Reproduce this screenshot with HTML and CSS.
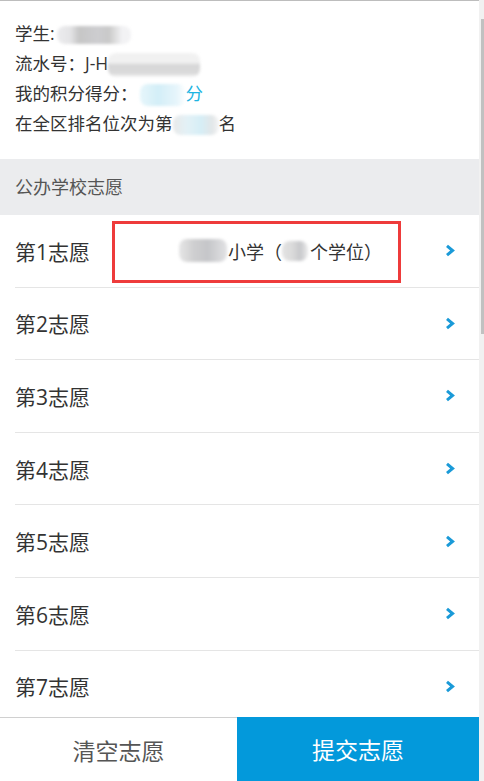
FILE: index.html
```html
<!DOCTYPE html>
<html lang="zh-CN">
<head>
  <meta charset="UTF-8">
  <meta name="viewport" content="width=device-width, initial-scale=1.0">
  <title>填报志愿</title>
  <link rel="stylesheet" href="styles.css">
</head>
<body>

  <div class="app">
    <div class="contenido">
      <!-- 学生信息 -->
      <section class="info">
        <p>学生:<span class="mask mask-nombre"></span></p>
        <p>流水号：J-H<span class="mask mask-serie"></span></p>
        <p>我的积分得分：<span class="azul"><span class="mask mask-puntos"></span>分</span></p>
        <p>在全区排名位次为第<span class="mask mask-rango"></span>名</p>
      </section>

      <!-- 公办学校志愿 -->
      <h2 class="grupo">公办学校志愿</h2>
      <ul class="lista">
        <li class="fila">
          <span class="etiqueta">第1志愿</span>
          <span class="valor"><span class="mask mask-escuela"></span>小学（<span class="mask mask-plazas"></span>个学位）</span>
          <svg class="flecha" viewBox="0 0 10 13"><polyline points="2,1.8 7.6,6.5 2,11.2"/></svg>
          <span class="marca"></span>
        </li>
        <li class="fila"><span class="etiqueta">第2志愿</span><svg class="flecha" viewBox="0 0 10 13"><polyline points="2,1.8 7.6,6.5 2,11.2"/></svg></li>
        <li class="fila"><span class="etiqueta">第3志愿</span><svg class="flecha" viewBox="0 0 10 13"><polyline points="2,1.8 7.6,6.5 2,11.2"/></svg></li>
        <li class="fila"><span class="etiqueta">第4志愿</span><svg class="flecha" viewBox="0 0 10 13"><polyline points="2,1.8 7.6,6.5 2,11.2"/></svg></li>
        <li class="fila"><span class="etiqueta">第5志愿</span><svg class="flecha" viewBox="0 0 10 13"><polyline points="2,1.8 7.6,6.5 2,11.2"/></svg></li>
        <li class="fila"><span class="etiqueta">第6志愿</span><svg class="flecha" viewBox="0 0 10 13"><polyline points="2,1.8 7.6,6.5 2,11.2"/></svg></li>
        <li class="fila"><span class="etiqueta">第7志愿</span><svg class="flecha" viewBox="0 0 10 13"><polyline points="2,1.8 7.6,6.5 2,11.2"/></svg></li>
      </ul>
    </div>

    <!-- Barra inferior -->
    <div class="acciones">
      <button class="btn-limpiar">清空志愿</button>
      <button class="btn-enviar">提交志愿</button>
    </div>
  </div>

  <!-- Barra de desplazamiento -->
  <div class="scroll">
    <div class="scroll-thumb"></div>
  </div>

</body>
</html>
```

FILE: styles.css
```css
    body {
      margin: 0;
      padding: 0;
      height: 100vh;
      display: flex;
      overflow: hidden;
      background-color: #ffffff;
      font-family: "Open Sans", "Noto Sans CJK SC", sans-serif;
      color: #333333;
    }

    .app {
      flex: 1;
      min-width: 0;
      display: flex;
      flex-direction: column;
      border-top: 1px solid #bdbdbd;
    }

    .contenido {
      flex: 1;
      min-height: 0;
      overflow-y: auto;
    }

    .contenido::-webkit-scrollbar {
      width: 0;
    }

    /* Información del alumno */
    .info {
      padding: 17px 15px 21px;
    }

    .info p {
      margin: 0;
      font-size: 17.5px;
      line-height: 30px;
      height: 30px;
    }

    .azul {
      color: #1eb4e2;
    }

    .mask {
      display: inline-block;
      vertical-align: middle;
      border-radius: 8px;
      filter: blur(1.5px);
    }

    .mask-nombre {
      width: 74px;
      height: 18px;
      margin-left: 2px;
      background: linear-gradient(90deg, #ececee 0%, #e4e4e6 18%, #c6c6c6 30%, #cdcdd0 55%, #c9c9c9 70%, #f2f2f4 88%);
    }

    .mask-serie {
      width: 92px;
      height: 24px;
      background: linear-gradient(180deg, #f1f1f1 0%, #f1f1f1 40%, #d6d6d7 50%, #dadada 85%, #f7f7f7 100%);
    }

    .mask-puntos {
      width: 46px;
      height: 22px;
      margin-left: 2px;
      background: linear-gradient(90deg, #e6f6fb 0%, #d3eef7 40%, #e6f5fb 80%, #ffffff 100%);
    }

    .mask-rango {
      width: 46px;
      height: 20px;
      background: linear-gradient(90deg, #e9e9e9 0%, #e3f1f6 30%, #d6eef6 60%, #e2e6e8 85%, #f5f5f5 100%);
    }

    .mask-escuela {
      width: 48px;
      height: 23px;
      margin-right: 1px;
      background: linear-gradient(90deg, #e6e6e6 0%, #cfcfd0 30%, #c5c6c9 60%, #e2e2e4 100%);
    }

    .mask-plazas {
      width: 26px;
      height: 20px;
      margin-right: 2px;
      background: linear-gradient(90deg, #e3e3e3 0%, #dadada 40%, #c7c8cb 70%, #ececec 100%);
    }

    /* Grupo de voluntades */
    .grupo {
      margin: 0;
      padding: 0 15px;
      height: 56px;
      line-height: 56px;
      background-color: #ebecee;
      color: #555555;
      font-size: 18px;
      font-weight: normal;
    }

    .lista {
      list-style: none;
      margin: 0;
      padding: 0 0 0 15px;
    }

    .fila {
      position: relative;
      display: flex;
      align-items: center;
      height: 72.6px;
      box-sizing: border-box;
      border-bottom: 1px solid #e5e5e5;
      padding-right: 24px;
    }

    .etiqueta {
      font-size: 21px;
      color: #333333;
    }

    .valor {
      margin-left: auto;
      margin-right: 63px;
      font-size: 18px;
      color: #333333;
      display: flex;
      align-items: center;
    }

    .flecha {
      margin-left: auto;
      width: 10px;
      height: 13px;
      fill: none;
      stroke: #1a9ad8;
      stroke-width: 3;
    }

    .valor + .flecha {
      margin-left: 0;
    }

    /* Recuadro rojo de anotación */
    .marca {
      position: absolute;
      left: 97px;
      top: 6px;
      width: 289px;
      height: 62px;
      box-sizing: border-box;
      border: 3px solid #ee3b3b;
      pointer-events: none;
    }

    /* Barra inferior */
    .acciones {
      height: 64px;
      display: flex;
      flex-shrink: 0;
    }

    .acciones button {
      border: none;
      margin: 0;
      padding: 0;
      font-family: "Open Sans", "Noto Sans CJK SC", sans-serif;
      font-size: 23px;
      cursor: pointer;
    }

    .btn-limpiar {
      width: 49.5%;
      background-color: #ffffff;
      color: #555555;
      border-top: 1px solid #d0d0d0 !important;
    }

    .btn-enviar {
      flex: 1;
      background-color: #0399db;
      color: #ffffff;
    }

    /* Barra de desplazamiento dibujada */
    .scroll {
      width: 5px;
      flex-shrink: 0;
      background-color: #f1f1f1;
    }

    .scroll-thumb {
      margin: 19px 0 0 2px;
      height: 315px;
      background-color: #c1c1c1;
    }
```
